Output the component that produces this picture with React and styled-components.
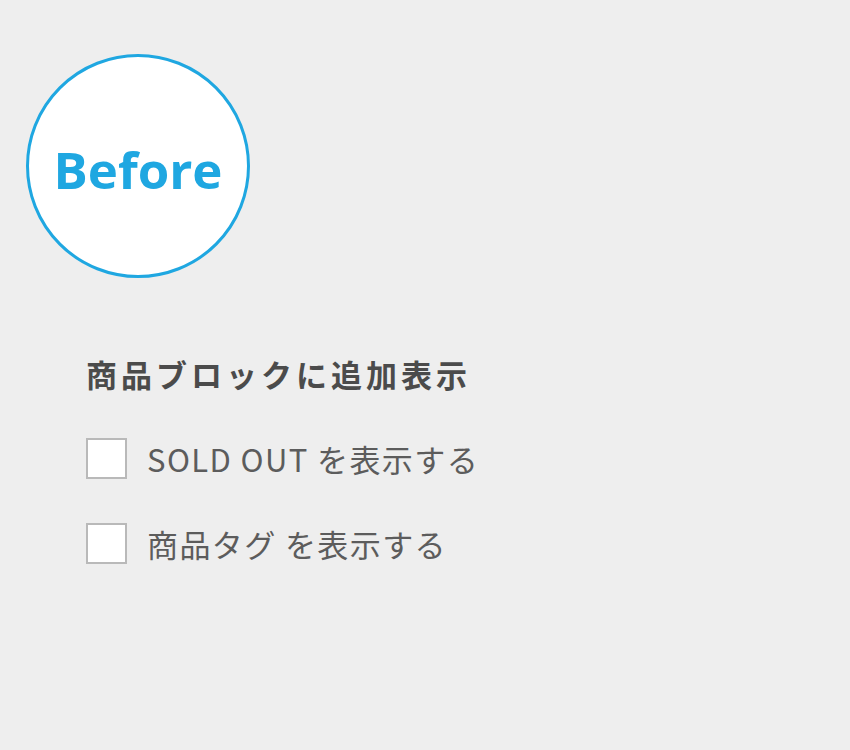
import React from 'react';
import styled, { createGlobalStyle } from 'styled-components';

const GlobalStyle = createGlobalStyle`
  html, body {
    margin: 0;
    padding: 0;
    background: #eeeeee;
  }
  body {
    font-family: 'Noto Sans CJK JP', 'Noto Sans', sans-serif;
  }
`;

const Page = styled.div`
  width: 850px;
  height: 750px;
  box-sizing: border-box;
  padding: 54px 0 0 26px;
  background: #eeeeee;
`;

const Badge = styled.div`
  width: 224px;
  height: 224px;
  box-sizing: border-box;
  border: 3px solid #1fa7e1;
  border-radius: 50%;
  background: #ffffff;
  display: flex;
  align-items: center;
  justify-content: center;
  color: #1fa7e1;
  font-family: 'Open Sans', sans-serif;
  font-weight: 700;
  font-size: 51px;
  padding-top: 6px;
`;

const Options = styled.section`
  margin: 76px 0 0 60px;
  display: flex;
  flex-direction: column;
`;

const Title = styled.h2`
  margin: 0 0 44px;
  font-size: 31px;
  font-weight: 700;
  letter-spacing: 4px;
  color: #4b4b4b;
  line-height: 40px;
`;

const Option = styled.label`
  display: flex;
  align-items: center;
  gap: 20px;
  height: 41px;
  margin-bottom: 44px;
  color: #5c5c5c;
  font-size: 31px;
  letter-spacing: 1.4px;
  line-height: 41px;
`;

const Box = styled.span`
  width: 41px;
  height: 41px;
  box-sizing: border-box;
  border: 2px solid #b9b9b9;
  background: #ffffff;
  flex: none;
`;

const options = ['SOLD OUT を表示する', '商品タグ を表示する'];

const App = () => (
  <>
    <GlobalStyle />
    <Page>
      <Badge>Before</Badge>
      <Options>
        <Title>商品ブロックに追加表示</Title>
        {options.map((text) => (
          <Option key={text}>
            <Box />
            <span>{text}</span>
          </Option>
        ))}
      </Options>
    </Page>
  </>
);

export default App;
